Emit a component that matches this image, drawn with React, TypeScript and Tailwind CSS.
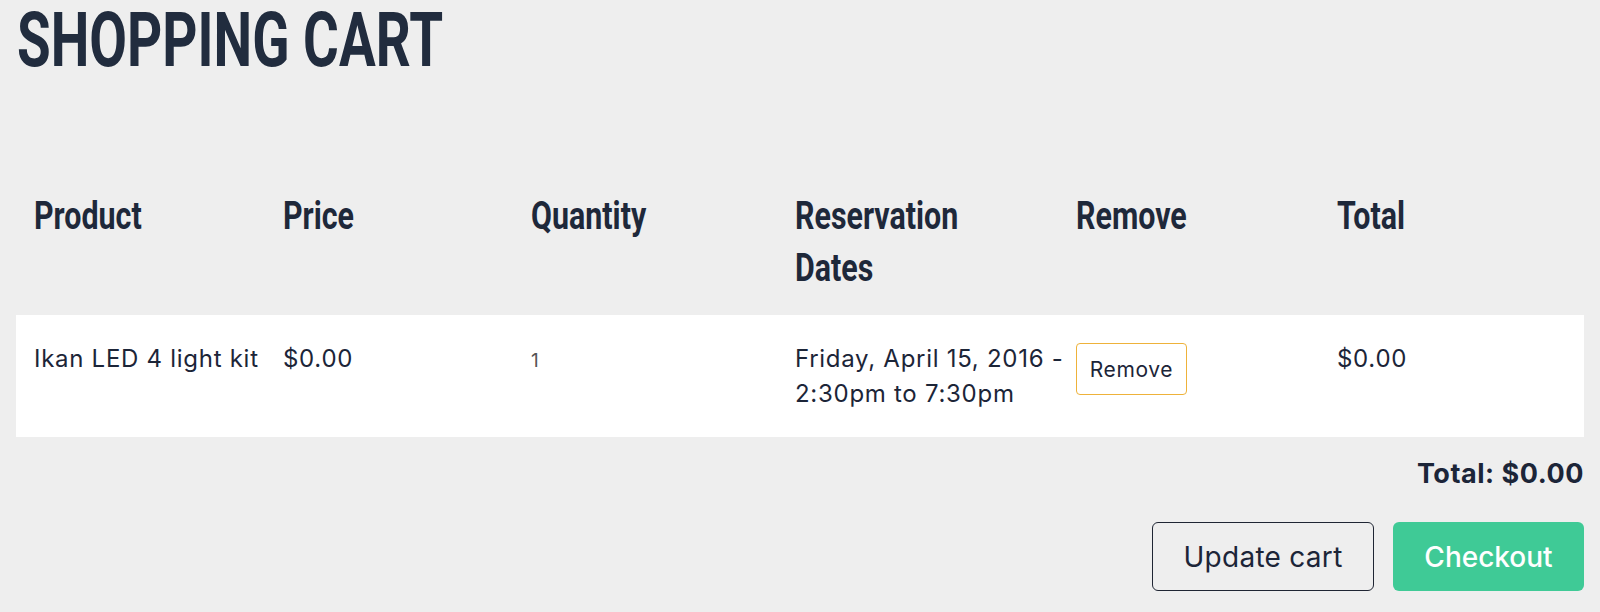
export default function App() {
  const head = "inline-block origin-left scale-x-[0.8] font-['Roboto',sans-serif] font-bold text-[38px] leading-[52px] text-[#1e283a]";
  const cell = "pl-[18px]";
  return (
    <div className="min-h-screen bg-[#eeeeee] px-4 font-['Inter',sans-serif] text-[#1c2538]">
      <h1 className="w-[440px] pt-[2px] pl-px whitespace-nowrap">
        <span className="inline-block origin-left scale-x-[0.72] font-['Roboto',sans-serif] font-bold text-[76px] leading-none text-[#212c3e]">
          SHOPPING CART
        </span>
      </h1>

      {/* table head */}
      <div className="mt-[112px] grid grid-cols-[249px_248px_264px_281px_261px_1fr]">
        <div className={cell}><span className={head}>Product</span></div>
        <div className={cell}><span className={head}>Price</span></div>
        <div className={cell}><span className={head}>Quantity</span></div>
        <div className={cell}><span className={head}>Reservation<br />Dates</span></div>
        <div className={cell}><span className={head}>Remove</span></div>
        <div className={cell}><span className={head}>Total</span></div>
      </div>

      {/* row */}
      <div className="mt-[21px] grid grid-cols-[249px_248px_264px_281px_261px_1fr] bg-white py-[26px] text-[24px] leading-[35px] tracking-[0.03em]">
        <div className={cell}>Ikan LED 4 light kit</div>
        <div className={cell}>$0.00</div>
        <div className={cell}><span className="text-[19px] text-[#555]">1</span></div>
        <div className={`${cell} whitespace-nowrap`}>
          Friday, April 15, 2016 -<br />2:30pm to 7:30pm
        </div>
        <div className={cell}>
          <button className="mt-[2px] h-[52px] w-[111px] rounded-[4px] border border-[#eeb23a] bg-white text-[21px] tracking-[0.03em] text-[#1c2538]">
            Remove
          </button>
        </div>
        <div className={cell}>$0.00</div>
      </div>

      <div className="mt-[21px] text-right text-[27px] font-bold leading-[32px] tracking-[0.02em]">Total: $0.00</div>

      <div className="mt-[32px] flex justify-end gap-[19px]">
        <button className="h-[69px] w-[222px] rounded-[6px] border-[1.5px] border-[#1f2533] text-[28px] tracking-[0.01em] text-[#1c2538]">
          Update cart
        </button>
        <button className="h-[69px] w-[191px] rounded-[6px] bg-[#3fca96] text-[28px] font-medium text-white">
          Checkout
        </button>
      </div>
    </div>
  );
}
